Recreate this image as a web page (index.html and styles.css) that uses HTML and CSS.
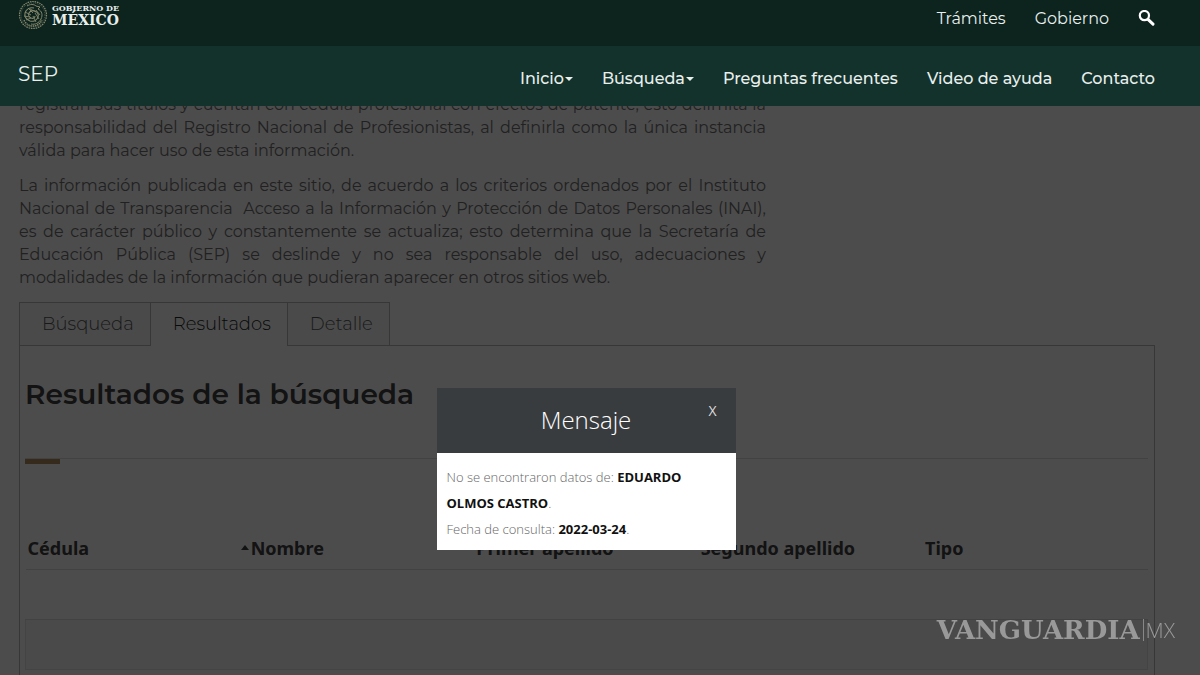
FILE: index.html
```
<!DOCTYPE html>
<html lang="es">

<head>
    <meta charset="UTF-8">
    <meta name="viewport" content="width=device-width, initial-scale=1">
    <title>Registro Nacional de Profesionistas</title>
    <link rel="stylesheet" href="styles.css">
</head>

<body>

    <header class="header">
        <div class="topbar">
            <a class="logo" href="#">
                <svg class="logo-seal" viewBox="0 0 30 30" fill="none" stroke="#85876b" aria-hidden="true">
                    <circle cx="15" cy="15" r="13.5" stroke-width="1.2" stroke-dasharray="1.6 .8" />
                    <circle cx="15" cy="15" r="12" stroke-width=".6" stroke-dasharray="1 1" />
                    <path d="M9 6c3-2 7-2 9 0l4 1-2 2c4 2 5 6 3 10-2 4-6 6-10 5" stroke-width="1" />
                    <path d="M16 8c-4-1-8 1-9 5s2 7 5 8c4 1 7-1 8-4s-1-5-3-6-5 0-6 2 0 4 2 5 4 0 4-2" stroke-width="1.1" />
                    <path d="M10 8l5 5M7 12l6 3M6 16l6 1M8 20l5-2M18 10l4 5M17 13l4 6M15 16l3 6M12 9l6 3" stroke-width=".9" />
                    <path d="M6 20c2 4 5 6 9 6s7-2 9-6" stroke-width="1.4" stroke-dasharray="1.5 .7" />
                </svg>
                <span class="logo-text">
                    <span class="logo-small">GOBIERNO DE</span>
                    <span class="logo-big">MÉXICO</span>
                </span>
            </a>
            <nav class="top-links">
                <a href="#">Trámites</a>
                <a href="#">Gobierno</a>
                <a href="#" aria-label="Buscar">
                    <svg class="search-icon" viewBox="0 0 17 17" fill="none" stroke="#fff" aria-hidden="true">
                        <circle cx="6.4" cy="5.6" r="4.6" stroke-width="2.2" />
                        <path d="M10 9.3l5 4.8" stroke-width="3" stroke-linecap="round" />
                    </svg>
                </a>
            </nav>
        </div>
        <div class="subbar">
            <a class="brand" href="#">SEP</a>
            <nav class="sub-links">
                <a href="#">Inicio<span class="caret"></span></a>
                <a href="#">Búsqueda<span class="caret"></span></a>
                <a href="#">Preguntas frecuentes</a>
                <a href="#">Video de ayuda</a>
                <a href="#">Contacto</a>
            </nav>
        </div>
    </header>

    <main class="container">
        <div class="intro">
            <p>registran sus títulos y cuentan con cédula profesional con efectos de patente, esto delimita la
                responsabilidad del Registro Nacional de Profesionistas, al definirla como la única instancia
                válida para hacer uso de esta información.</p>
            <p>La información publicada en este sitio, de acuerdo a los criterios ordenados por el Instituto
                Nacional de Transparencia&nbsp; Acceso a la Información y Protección de Datos Personales (INAI),
                es de carácter público y constantemente se actualiza; esto determina que la Secretaría de
                Educación Pública (SEP) se deslinde y no sea responsable del uso, adecuaciones y
                modalidades de la información que pudieran aparecer en otros sitios web.</p>
        </div>

        <div class="tabs">
            <button class="tab" type="button">Búsqueda</button>
            <button class="tab active" type="button">Resultados</button>
            <button class="tab" type="button">Detalle</button>
        </div>
        <section class="panel">
            <h2>Resultados de la búsqueda</h2>
            <hr class="red">
            <table class="results">
                <thead>
                    <tr>
                        <th class="col-cedula">Cédula</th>
                        <th class="col-nombre"><span class="sort"></span>Nombre</th>
                        <th>Primer apellido</th>
                        <th>Segundo apellido</th>
                        <th>Tipo</th>
                    </tr>
                </thead>
                <tbody>
                    <tr>
                        <td colspan="5"></td>
                    </tr>
                    <tr class="striped">
                        <td colspan="5"></td>
                    </tr>
                </tbody>
            </table>
        </section>
    </main>

    <!-- Mensaje -->
    <div class="overlay">
        <div class="modal" role="dialog" aria-labelledby="modal-title">
            <div class="modal-header">
                <h4 id="modal-title">Mensaje</h4>
                <button class="close" type="button" aria-label="Cerrar">X</button>
            </div>
            <div class="modal-body">
                No se encontraron datos de: <strong>EDUARDO OLMOS CASTRO</strong>.<br>
                Fecha de consulta: <strong>2022-03-24</strong>.
            </div>
        </div>
    </div>

    <div class="watermark">
        <span class="watermark-name">VANGUARDIA</span>
        <span class="watermark-mx">MX</span>
    </div>

</body>

</html>
```

FILE: styles.css
```
* {
    box-sizing: border-box;
}

body {
    margin: 0;
    height: 100vh;
    overflow: hidden;
    background-color: #FFFFFF;
    color: #404041;
    font-family: Montserrat, Inter, sans-serif;
    font-size: 16px;
}

a {
    color: #E8EFED;
    text-decoration: none;
}

/* header */
.header {
    position: fixed;
    top: 0;
    left: 0;
    right: 0;
    z-index: 20;
}

.topbar,
.subbar {
    display: flex;
    justify-content: space-between;
    padding: 0 45px 0 18px;
}

.topbar {
    height: 46px;
    background-color: #0C231E;
}

.subbar {
    height: 60px;
    background-color: #13322B;
}

.logo {
    display: flex;
    align-items: flex-start;
    gap: 4px;
}

.logo-seal {
    width: 30px;
    height: 30px;
}

.logo-text {
    display: flex;
    flex-direction: column;
    padding-top: 4px;
    font-family: "DejaVu Serif", serif;
    font-weight: bold;
}

.logo-small {
    font-size: 8px;
    line-height: 9px;
}

.logo-big {
    font-size: 14px;
    line-height: 15px;
}

.top-links,
.sub-links {
    display: flex;
    align-items: center;
    gap: 29px;
}

.top-links {
    height: 36px;
}

.sub-links {
    padding-top: 4px;
    font-weight: 500;
}

.search-icon {
    display: block;
    width: 17px;
    height: 17px;
}

.brand {
    font-size: 20px;
    line-height: 56px;
}

.caret {
    display: inline-block;
    margin-left: 1px;
    border-top: 4px solid #E8EFED;
    border-left: 4px solid transparent;
    border-right: 4px solid transparent;
    vertical-align: middle;
}

/* contenido */
.container {
    display: flex;
    flex-direction: column;
    height: 100%;
    padding: 93px 45px 0 19px;
}

.intro {
    width: 747px;
    max-width: 100%;
    color: #707070;
    font-weight: 400;
    line-height: 23px;
    text-align: justify;
}

.intro p {
    margin: 0 0 12px;
}

.tabs {
    display: flex;
    margin-top: 1px;
}

.tab {
    height: 44px;
    padding: 0 16px 0 22px;
    border: 1px solid #B8B8B8;
    background-color: #F7F7F7;
    color: #545454;
    font-family: inherit;
    font-size: 18px;
    font-weight: 300;
}

.tab.active {
    z-index: 1;
    border-left: 0;
    border-right: 0;
    border-bottom-color: #FFFFFF;
    background-color: #FFFFFF;
    color: #222222;
}

.panel {
    flex: 1;
    margin-top: -1px;
    padding: 30px 6px 0 5px;
    border: 1px solid #B8B8B8;
    border-bottom: 0;
}

.panel h2 {
    margin: 0;
    font-size: 28px;
    font-weight: 600;
    line-height: 36px;
}

.red {
    height: 6px;
    margin: 46px 0 64px;
    border: 0;
    border-top: 1px solid #DDDDDD;
    background: linear-gradient(#B38E5D, #B38E5D) no-repeat;
    background-size: 35px 5px;
}

.results {
    width: 100%;
    border-collapse: collapse;
    table-layout: fixed;
    font-family: "Noto Sans", sans-serif;
}

.results th {
    padding: 8px 2px;
    font-size: 18px;
    line-height: 25px;
    text-align: left;
}

.col-cedula {
    width: 19%;
}

.col-nombre {
    width: 21%;
}

.sort {
    display: inline-block;
    margin: 0 2px 5px 0;
    border-bottom: 5px solid #404041;
    border-left: 4px solid transparent;
    border-right: 4px solid transparent;
    vertical-align: middle;
}

.results td {
    height: 50px;
    border-top: 1px solid #DDDDDD;
}

.results .striped {
    border: 1px solid #E4E4E4;
    background-color: #F9F9F9;
}

/* mensaje */
.overlay {
    position: fixed;
    inset: 0;
    z-index: 10;
    display: flex;
    align-items: flex-start;
    justify-content: center;
    padding: 388px 28px 0 0;
    background-color: rgba(0, 0, 0, 0.7);
}

.modal {
    width: 299px;
    background-color: #FFFFFF;
    font-family: "Open Sans", sans-serif;
}

.modal-header {
    position: relative;
    background-color: #393C3E;
    color: #FFFFFF;
    text-align: center;
}

.modal-header h4 {
    margin: 0;
    padding-bottom: 2px;
    font-size: 24px;
    font-weight: 300;
    line-height: 63px;
}

.close {
    position: absolute;
    top: 12px;
    right: 16px;
    padding: 0 3px;
    border: 0;
    background: none;
    color: #DDDDDD;
    font-family: inherit;
    font-size: 14px;
    line-height: 22px;
    cursor: pointer;
}

.modal-body {
    padding: 11px 10px 8px;
    color: #666666;
    font-size: 13px;
    font-weight: 300;
    line-height: 26px;
}

.modal-body strong {
    color: #111111;
    font-weight: 700;
}

.watermark {
    position: fixed;
    right: 25px;
    bottom: 29px;
    z-index: 30;
    display: flex;
    align-items: center;
    gap: 3px;
    color: #999999;
    line-height: 32px;
}

.watermark-name {
    font-family: "DejaVu Serif", serif;
    font-size: 26px;
    font-weight: bold;
}

.watermark-mx {
    padding-left: 2px;
    border-left: 1px solid #888888;
    font-family: "Open Sans", sans-serif;
    font-size: 21px;
    font-weight: 300;
    line-height: 22px;
}
```
